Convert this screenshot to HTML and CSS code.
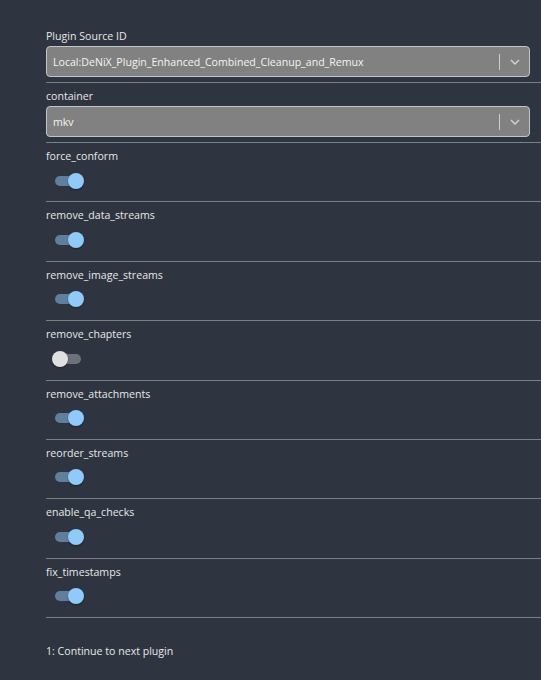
FILE: index.html
```html
<!DOCTYPE html>
<html>
<head>
<meta charset="utf-8">
<link rel="stylesheet" href="styles.css">
</head>
<body>
<div class="form">
  <div class="field">
    <div class="label">Plugin Source ID</div>
    <div class="select">
      <span class="value">Local:DeNiX_Plugin_Enhanced_Combined_Cleanup_and_Remux</span>
      <span class="sep"></span>
      <span class="chev"><svg width="10" height="6" viewBox="0 0 10 6"><polyline points="1,1 5,5 9,1" fill="none" stroke="#d4d4d4" stroke-width="1.4"/></svg></span>
    </div>
  </div>
  <div class="field">
    <div class="label">container</div>
    <div class="select">
      <span class="value">mkv</span>
      <span class="sep"></span>
      <span class="chev"><svg width="10" height="6" viewBox="0 0 10 6"><polyline points="1,1 5,5 9,1" fill="none" stroke="#d4d4d4" stroke-width="1.4"/></svg></span>
    </div>
  </div>
  <div class="field toggle">
    <div class="label">force_conform</div>
    <span class="switch on"><span class="track"></span><span class="thumb"></span></span>
  </div>
  <div class="field toggle">
    <div class="label">remove_data_streams</div>
    <span class="switch on"><span class="track"></span><span class="thumb"></span></span>
  </div>
  <div class="field toggle">
    <div class="label">remove_image_streams</div>
    <span class="switch on"><span class="track"></span><span class="thumb"></span></span>
  </div>
  <div class="field toggle">
    <div class="label">remove_chapters</div>
    <span class="switch"><span class="track"></span><span class="thumb"></span></span>
  </div>
  <div class="field toggle">
    <div class="label">remove_attachments</div>
    <span class="switch on"><span class="track"></span><span class="thumb"></span></span>
  </div>
  <div class="field toggle">
    <div class="label">reorder_streams</div>
    <span class="switch on"><span class="track"></span><span class="thumb"></span></span>
  </div>
  <div class="field toggle">
    <div class="label">enable_qa_checks</div>
    <span class="switch on"><span class="track"></span><span class="thumb"></span></span>
  </div>
  <div class="field toggle">
    <div class="label">fix_timestamps</div>
    <span class="switch on"><span class="track"></span><span class="thumb"></span></span>
  </div>
  <div class="footer">1: Continue to next plugin</div>
</div>
</body>
</html>
```

FILE: styles.css
```css
html, body {
  margin: 0;
  padding: 0;
  background: #2e3440;
  overflow: hidden;
}
body {
  font-family: "Open Sans", "Noto Sans", sans-serif;
  font-size: 10.6px;
  color: #e8e8e8;
}
.form {
  padding: 23px 0 0 46px;
  display: flex;
  flex-direction: column;
}
.field {
  display: flex;
  flex-direction: column;
  padding-top: 5px;
  padding-bottom: 5px;
  border-bottom: 1px solid #7b7f86;
}
.label {
  line-height: 16px;
  height: 16px;
  margin-bottom: 2px;
  white-space: nowrap;
}
.select {
  box-sizing: border-box;
  height: 31px;
  margin-right: 11px;
  background: #818181;
  border: 1px solid #c4c4c4;
  border-radius: 4px;
  display: flex;
  align-items: center;
  color: #f4f4f4;
}
.select .value {
  flex: 1;
  padding-left: 6px;
  white-space: nowrap;
  overflow: hidden;
}
.select .sep {
  width: 1px;
  height: 16px;
  background: #cdcdcd;
}
.select .chev {
  width: 29px;
  display: flex;
  justify-content: center;
  align-items: center;
}
.select .chev svg {
  display: block;
}
.toggle {
  padding-bottom: 8.875px;
}
.toggle .label {
  margin-bottom: 4.5px;
}
.switch {
  position: relative;
  display: block;
  width: 40px;
  height: 24px;
  margin-left: 2px;
  box-sizing: border-box;
  padding: 7px;
}
.switch .track {
  display: block;
  width: 26px;
  height: 10px;
  border-radius: 5px;
  background: rgba(255, 255, 255, 0.3);
}
.switch .thumb {
  position: absolute;
  left: 4px;
  top: 4px;
  width: 16px;
  height: 16px;
  border-radius: 50%;
  background: #e0e0e0;
  box-shadow: 0 1px 2px rgba(0, 0, 0, 0.35);
}
.switch.on .track {
  background: rgba(144, 202, 249, 0.5);
}
.switch.on .thumb {
  left: 20px;
  background: #90caf9;
}
.footer {
  margin-top: 24.5px;
  line-height: 16px;
  white-space: nowrap;
}
```
